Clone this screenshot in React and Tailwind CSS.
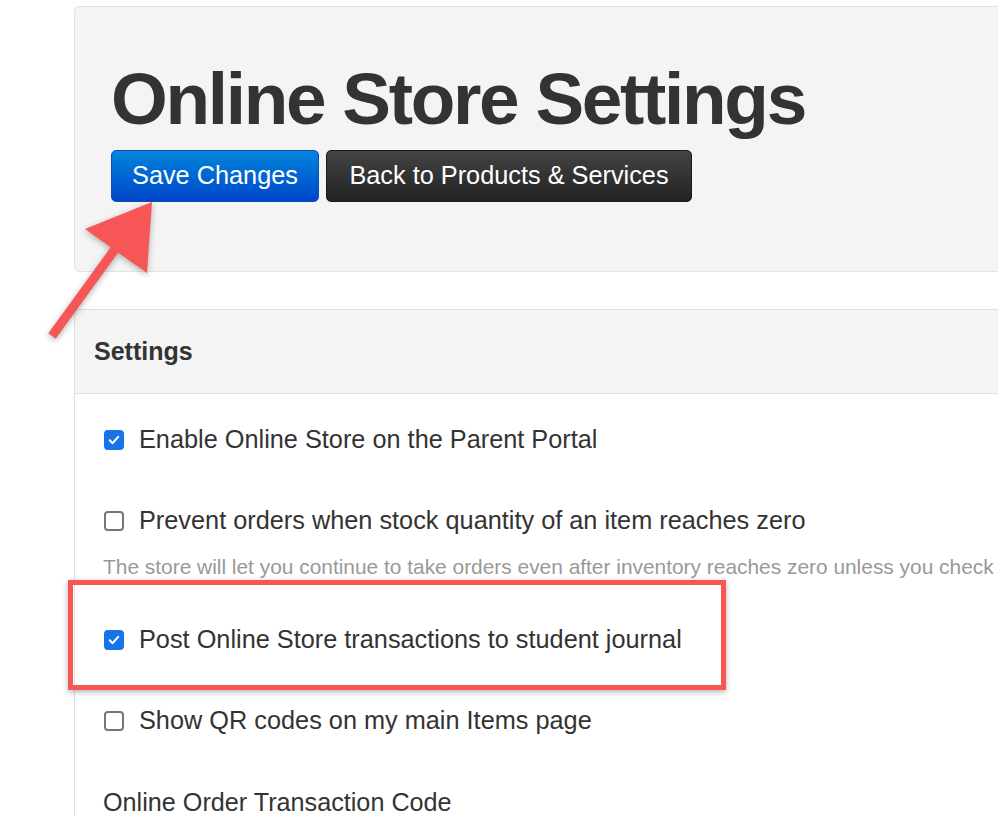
import React from "react";

const Check = ({ on }) =>
  on ? (
    <span className="flex h-[20px] w-[20px] shrink-0 items-center justify-center rounded-[4px] bg-[#1673ea]">
      <svg viewBox="0 0 20 20" width="14" height="14">
        <path d="M4 10.5l4 4L16 5.5" fill="none" stroke="white" strokeWidth="3" strokeLinecap="round" strokeLinejoin="round" />
      </svg>
    </span>
  ) : (
    <span className="h-[20px] w-[20px] shrink-0 rounded-[4px] border-2 border-[#767676] bg-white" />
  );

const Row = ({ on, children, className = "" }) => (
  <div className={`flex h-[30px] items-center gap-[15px] ${className}`}>
    <Check on={on} />
    <span className="whitespace-nowrap text-[25.3px] text-[#333]">{children}</span>
  </div>
);

export default function App() {
  return (
    <div
      className="relative h-[816px] w-[998px] overflow-hidden bg-white"
      style={{ fontFamily: '"Liberation Sans", Arial, sans-serif' }}
    >
      {/* page header */}
      <div className="ml-[74px] mt-[6px] h-[266px] w-[960px] rounded-l-[5px] border border-[#e3e3e3] bg-[#f4f4f4] pl-[36px] pt-[50px]">
        <h1 className="whitespace-nowrap text-[73px] font-bold leading-[84px] tracking-[-2.3px] text-[#333]">Online Store Settings</h1>
        <div className="mt-[9px] flex gap-[7px]">
          <button className="h-[52px] w-[208px] rounded-[5px] border border-[#0a4fb8] bg-gradient-to-b from-[#0b84dc] to-[#0045c9] text-[25.3px] text-white">
            Save Changes
          </button>
          <button className="h-[52px] w-[366px] rounded-[5px] border border-[#1a1a1a] bg-gradient-to-b from-[#444] to-[#222] text-[25.3px] text-white">
            Back to Products &amp; Services
          </button>
        </div>
      </div>

      {/* settings panel */}
      <div className="ml-[74px] mt-[37px] w-[960px] border-l border-t border-[#e0e0e0]">
        <div className="flex h-[84px] items-center border-b border-[#e0e0e0] bg-[#f4f4f4] pl-[19px]">
          <span className="text-[25px] font-bold text-[#333]">Settings</span>
        </div>
        <div className="flex flex-col pl-[29px] pt-[31px]">
          <Row on>Enable Online Store on the Parent Portal</Row>
          <Row className="mt-[51px]">Prevent orders when stock quantity of an item reaches zero</Row>
          <p className="ml-[-1px] mt-[19px] whitespace-nowrap text-[20.9px] leading-[24px] text-[#999]">
            The store will let you continue to take orders even after inventory reaches zero unless you check this box.
          </p>
          <Row on className="mt-[46px]">Post Online Store transactions to student journal</Row>
          <Row className="mt-[51px]">Show QR codes on my main Items page</Row>
          <div className="ml-[-1px] mt-[51px] h-[30px] whitespace-nowrap text-[25.2px] leading-[30px] text-[#333]">
            Online Order Transaction Code
          </div>
        </div>
      </div>

      {/* annotations */}
      <div className="pointer-events-none absolute left-[68px] top-[580px] h-[110px] w-[658px] border-[5px] border-[#f65656] shadow-[0_2px_6px_rgba(0,0,0,0.3)]" />
      <svg className="pointer-events-none absolute left-0 top-0" width="998" height="816">
        <g style={{ filter: "drop-shadow(0 2px 3px rgba(0,0,0,0.3))" }}>
          <line x1="52" y1="336" x2="118" y2="245" stroke="#f65656" strokeWidth="9" strokeLinecap="butt" />
          <polygon points="152,202 85,229 147,273" fill="#f65656" />
        </g>
      </svg>
    </div>
  );
}
